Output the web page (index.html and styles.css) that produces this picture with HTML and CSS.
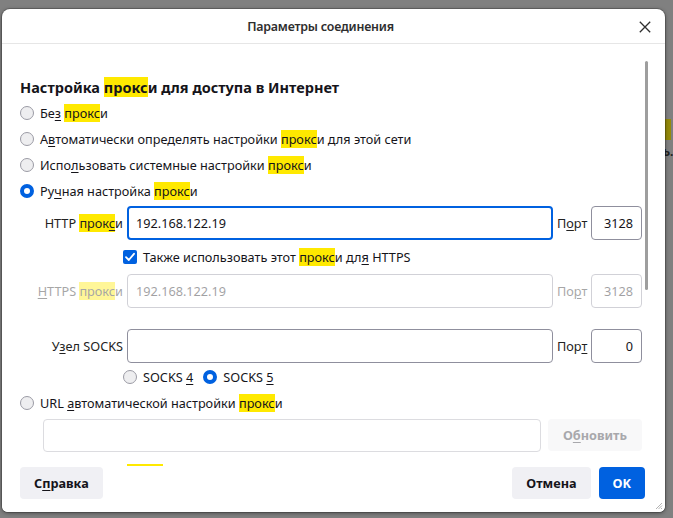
FILE: index.html
```html
<!DOCTYPE html>
<html lang="ru">
<head>
<meta charset="utf-8">
<title>Параметры соединения</title>
<link rel="stylesheet" href="styles.css">
</head>
<body>
<div class="backdrop">
  <span class="bg-mark"></span>
  <span class="bg-text">ь.</span>
</div>
<div class="dialog">
  <header class="titlebar">
    <span></span>
    <h2 class="title">Параметры соединения</h2>
    <button class="close" aria-label="Закрыть">
      <svg width="12" height="12" viewBox="0 0 12 12"><path d="M0.8 0.8 L11.2 11.2 M11.2 0.8 L0.8 11.2" stroke="#2e2e2e" stroke-width="1.3" fill="none"/></svg>
    </button>
  </header>

  <main class="content">
    <h1 class="heading">Настройка <mark class="hl">прокс</mark>и для доступа в Интернет</h1>

    <div class="radios">
      <label class="row-radio"><span class="radio"></span><span>Бе<u>з</u> <mark class="hl">прокс</mark>и</span></label>
      <label class="row-radio"><span class="radio"></span><span>А<u>в</u>томатически определять настройки <mark class="hl">прокс</mark>и для этой сети</span></label>
      <label class="row-radio"><span class="radio"></span><span>Испо<u>л</u>ьзовать системные настройки <mark class="hl">прокс</mark>и</span></label>
      <label class="row-radio"><span class="radio checked"></span><span>Ру<u>ч</u>ная настройка <mark class="hl">прокс</mark>и</span></label>
    </div>

    <div class="field-row http">
      <span class="flabel">HTTP <mark class="hl">прок<u>с</u></mark>и</span>
      <div class="input focused">192.168.122.19</div>
      <span class="plabel">П<u>о</u>рт</span>
      <div class="input port">3128</div>
    </div>

    <div class="check-row">
      <span class="checkbox"><svg width="14" height="14" viewBox="0 0 14 14"><path d="M3 7.2 L5.8 10 L11 3.8" stroke="#fff" stroke-width="1.8" fill="none" stroke-linecap="round" stroke-linejoin="round"/></svg></span>
      <span>Также использовать этот <mark class="hl">прокс</mark>и дл<u>я</u> HTTPS</span>
    </div>

    <div class="field-row disabled">
      <span class="flabel"><u>H</u>TTPS <mark class="hl">прокс</mark>и</span>
      <div class="input">192.168.122.19</div>
      <span class="plabel">По<u>р</u>т</span>
      <div class="input port">3128</div>
    </div>

    <div class="field-row socks">
      <span class="flabel">У<u>з</u>ел SOCKS</span>
      <div class="input"></div>
      <span class="plabel">Пор<u>т</u></span>
      <div class="input port">0</div>
    </div>

    <div class="socks-row">
      <label class="opt"><span class="radio"></span><span>SOCKS <u>4</u></span></label>
      <label class="opt"><span class="radio checked"></span><span>SOCKS <u>5</u></span></label>
    </div>

    <label class="row-radio url-radio"><span class="radio"></span><span>URL <u>а</u>втоматической настройки <mark class="hl">прокс</mark>и</span></label>

    <div class="url-row">
      <div class="input disabled-input"></div>
      <button class="btn btn-disabled">О<u>б</u>новить</button>
    </div>

    <p class="noproxy">Не использовать <mark class="hl">прокс</mark>и для</p>

    <div class="scrollbar"></div>
  </main>

  <footer class="footer">
    <button class="btn">С<u>п</u>равка</button>
    <div class="actions">
      <button class="btn">Отмена</button>
      <button class="btn btn-primary">OK</button>
    </div>
    <svg class="grip" width="8" height="8" viewBox="0 0 8 8"><path d="M7 1 L1 7 M7 3.5 L3.5 7 M7 6 L6 7" stroke="#a0a0a0" stroke-width="0.8"/></svg>
  </footer>
</div>
</body>
</html>
```

FILE: styles.css
```css
html, body {
  margin: 0;
  padding: 0;
}

body {
  background: #808080;
  font-family: "Noto Sans", "Open Sans", sans-serif;
  font-size: 12.7px;
  color: #15141a;
  width: 673px;
  height: 518px;
  overflow: hidden;
  position: relative;
}

.backdrop {
  position: absolute;
  inset: 0;
}

.bg-mark {
  position: absolute;
  left: 664px;
  top: 119px;
  width: 7px;
  height: 21px;
  background: #948a0a;
}

.bg-text {
  position: absolute;
  left: 663px;
  top: 143px;
  font-weight: bold;
  font-size: 12px;
  color: #222;
}

.dialog {
  position: relative;
  margin: 9px 0 0 2px;
  width: 663px;
  height: 503px;
  background: #fff;
  border-radius: 8px 8px 6px 6px;
  box-shadow: 0 0 0 1px rgba(0, 0, 0, 0.18), 0 1px 4px rgba(0, 0, 0, 0.45);
  display: flex;
  flex-direction: column;
  overflow: hidden;
}

.titlebar {
  height: 34px;
  flex: none;
  border-bottom: 1px solid #e6e6e6;
  display: grid;
  grid-template-columns: 1fr auto 1fr;
  align-items: center;
}

.title {
  margin: 0 26px 0 0;
  font-size: 12.4px;
  font-weight: 600;
  color: #2e2e2e;
  letter-spacing: -0.2px;
}

.close {
  justify-self: end;
  margin-right: 14px;
  margin-top: 1px;
  border: 0;
  background: none;
  padding: 0;
  width: 12px;
  height: 12px;
  display: flex;
}

.content {
  flex: 1;
  position: relative;
  overflow: hidden;
  padding: 33px 23px 0 18px;
}

.heading {
  margin: 0;
  font-size: 14.5px;
  line-height: 20px;
  font-weight: 700;
}

mark.hl {
  background: #ffe900;
  color: inherit;
}

u {
  text-underline-offset: 2px;
}

.radios {
  margin-top: 3px;
}

.row-radio {
  display: flex;
  align-items: center;
  height: 26px;
}

.radio {
  width: 14px;
  height: 14px;
  box-sizing: border-box;
  border-radius: 50%;
  border: 1px solid #9b9ba5;
  background: #eeeef0;
  margin-right: 6px;
  flex: none;
}

.radio.checked {
  border: 4px solid #0061e0;
  background: #fff;
}

.field-row {
  display: flex;
  align-items: center;
  height: 34px;
  gap: 4px;
}

.field-row.http {
  margin-top: 2px;
}

.field-row.socks {
  margin-top: 21px;
}

.flabel {
  width: 103px;
  text-align: right;
  flex: none;
  color: #222;
}

.plabel {
  width: 30px;
  flex: none;
  color: #222;
}

.input {
  box-sizing: border-box;
  height: 34px;
  flex: 1;
  border: 1px solid #8f8f9d;
  border-radius: 4px;
  padding: 0 8px;
  display: flex;
  align-items: center;
  background: #fff;
}

.input.focused {
  border: 2px solid #0061e0;
  padding: 0 7px;
}

.input.port {
  flex: none;
  width: 51px;
  justify-content: flex-end;
}

.disabled .flabel,
.disabled .plabel,
.disabled .input {
  opacity: 0.4;
}

.check-row {
  display: flex;
  align-items: center;
  height: 34px;
  padding-left: 103px;
}

.checkbox {
  width: 14px;
  height: 14px;
  border-radius: 2px;
  background: #0061e0;
  margin-right: 6px;
  display: flex;
}

.socks-row {
  display: flex;
  align-items: center;
  height: 28px;
  padding-left: 103px;
}

.opt {
  display: flex;
  align-items: center;
  margin-right: 10px;
}

.url-radio {
  height: 24px;
}

.url-row {
  display: flex;
  gap: 7px;
  margin-top: 4px;
  padding-left: 23px;
}

.url-row .input {
  height: 33px;
}

.disabled-input {
  border-color: #dcdce0;
}

.btn {
  box-sizing: border-box;
  height: 32px;
  border: 0;
  border-radius: 4px;
  padding: 0 14px;
  background: #f0f0f4;
  font-family: inherit;
  font-size: 12.7px;
  font-weight: 700;
  color: #15141a;
}

.btn-disabled {
  width: 94px;
  height: 32px;
  flex: none;
  background: #f8f8f9;
  color: #a8a8ac;
}

.btn-primary {
  background: #0061e0;
  color: #fff;
  padding: 0 14px;
}

.noproxy {
  margin: 11px 0 0;
  line-height: 20px;
}

.scrollbar {
  position: absolute;
  left: 643px;
  top: 17px;
  width: 3px;
  height: 229px;
  border-radius: 2px;
  background: #9e9e9e;
}

.footer {
  position: relative;
  flex: none;
  height: 46px;
  box-sizing: border-box;
  padding: 1px 20px 0 18px;
  display: flex;
  justify-content: space-between;
  align-items: flex-start;
  background: #fff;
}

.actions {
  display: flex;
  gap: 8px;
}

.grip {
  position: absolute;
  right: 2px;
  bottom: 2px;
}
```
